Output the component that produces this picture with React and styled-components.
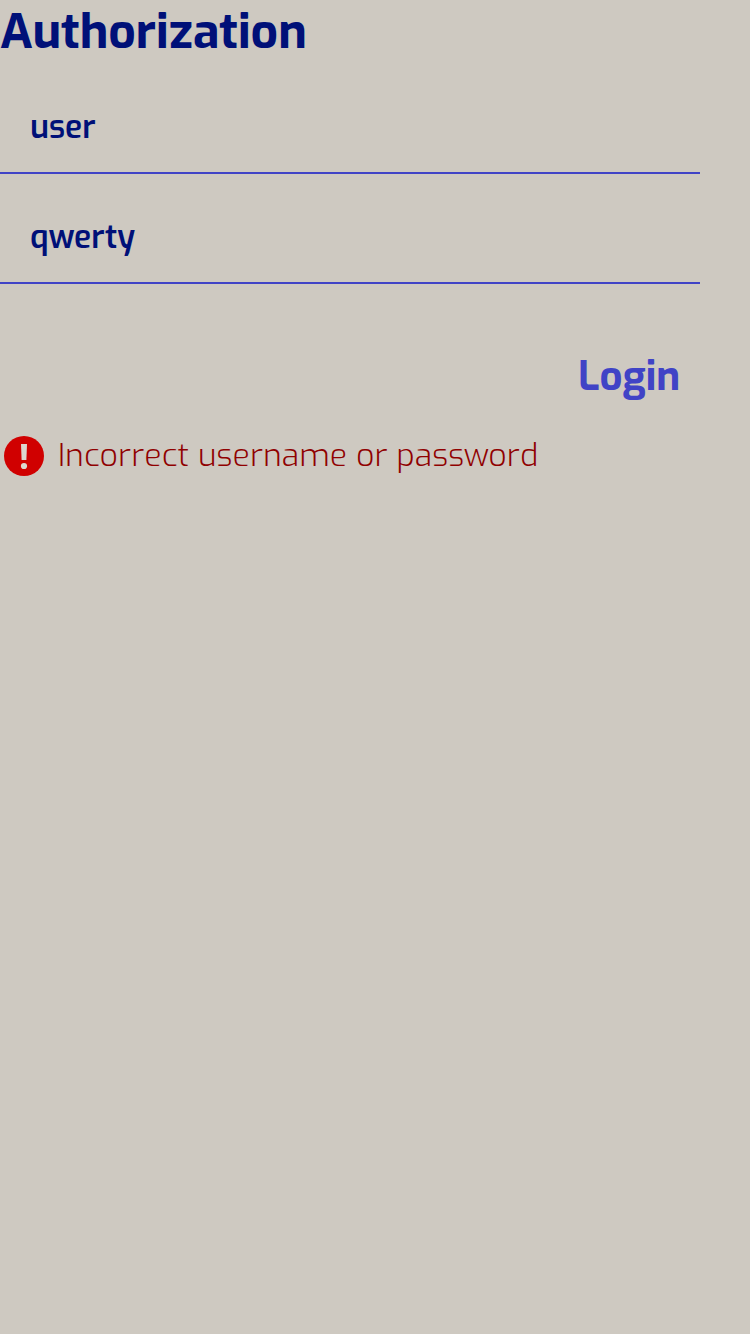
import React from "react";
import styled, { createGlobalStyle } from "styled-components";

const GlobalStyle = createGlobalStyle`
  * { box-sizing: border-box; }
  body { margin: 0; background: #cec9c1; }
`;

const Page = styled.main`
  display: flex;
  flex-direction: column;
  width: 750px;
  min-height: 1334px;
  background: #cec9c1;
`;

const Title = styled.h1`
  margin: 0;
  height: 64px;
  font: 700 48px/64px Exo, Roboto, sans-serif;
  color: #001078;
  white-space: nowrap;
`;

const Form = styled.form`
  display: flex;
  flex-direction: column;
  width: 700px;
`;

const Field = styled.input`
  width: 700px;
  height: 90px;
  margin-top: 20px;
  padding: 0 30px 2px;
  border: 0;
  border-bottom: 2px solid #4043c6;
  outline: 0;
  background: transparent;
  color: #001078;
  font: 600 32px Exo, Roboto, sans-serif;
`;

const LoginButton = styled.button`
  align-self: flex-end;
  margin-top: 63px;
  padding: 0 20px;
  height: 60px;
  border: 0;
  background: transparent;
  color: #4043c6;
  font: 700 40px/60px Exo, "Open Sans", sans-serif;
`;

const ErrorRow = styled.div`
  display: flex;
  align-items: center;
  gap: 14px;
  height: 40px;
  margin-top: 29px;
  padding-left: 4px;
`;

const ErrorText = styled.span`
  padding-bottom: 2px;
  color: #900000;
  font: 300 32px/38px Exo, Roboto, sans-serif;
  letter-spacing: 0.03px;
  white-space: nowrap;
`;

const ErrorIcon = () => (
  <svg width="40" height="40" viewBox="0 0 40 40" aria-hidden="true">
    <circle cx="20" cy="20" r="20" fill="#d00000" />
    <path d="M17 8h6l-.6 16h-4.8z" fill="#dcd7cf" />
    <circle cx="20" cy="30" r="3.1" fill="#dcd7cf" />
  </svg>
);

export default function App() {
  return (
    <Page>
      <GlobalStyle />
      <Title>Authorization</Title>
      <Form onSubmit={(e) => e.preventDefault()}>
        <Field defaultValue="user" aria-label="Username" />
        <Field defaultValue="qwerty" aria-label="Password" />
        <LoginButton>Login</LoginButton>
      </Form>
      <ErrorRow role="alert">
        <ErrorIcon />
        <ErrorText>Incorrect username or password</ErrorText>
      </ErrorRow>
    </Page>
  );
}
